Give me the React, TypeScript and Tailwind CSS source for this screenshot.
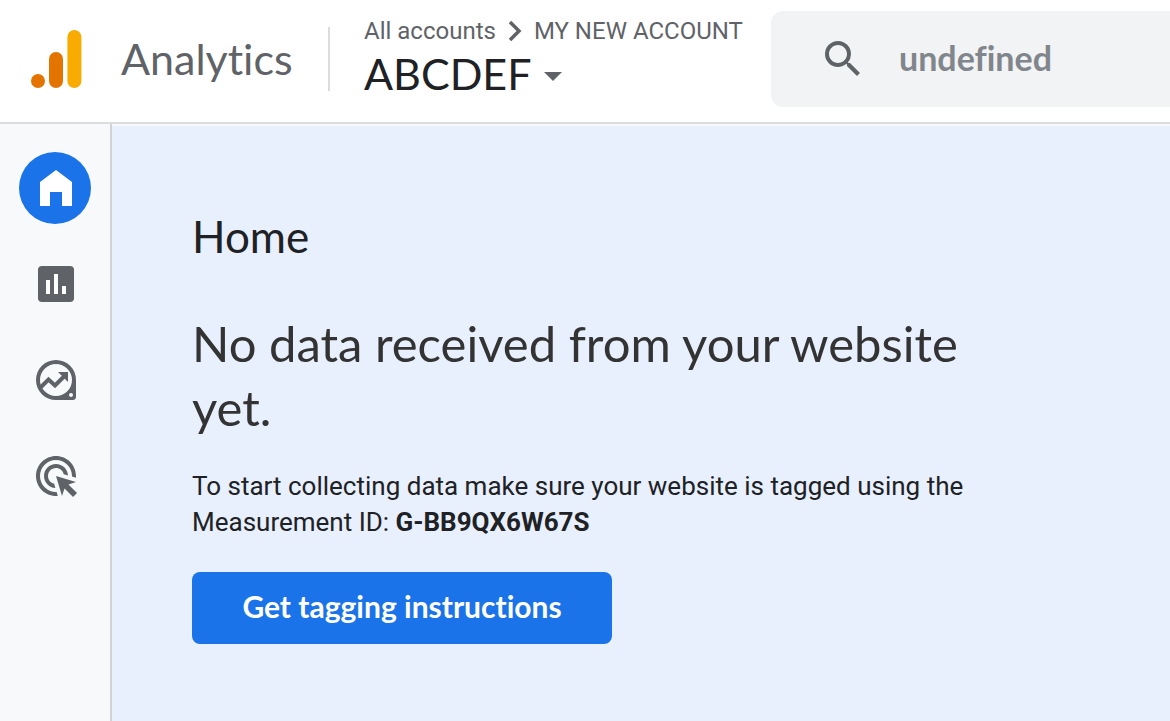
import React from 'react';

const NAV_ITEMS = [
    { label: 'Home', icon: HomeIcon, active: true },
    { label: 'Reports', icon: ReportsIcon, active: false },
    { label: 'Explore', icon: ExploreIcon, active: false },
    { label: 'Advertising', icon: AdvertisingIcon, active: false },
];

function LogoIcon() {
    return (
        <svg width="52" height="60" viewBox="0 0 52 60" aria-hidden="true">
            <circle cx="7" cy="52" r="7" fill="#e37400" />
            <rect x="18" y="23" width="14" height="36" rx="7" fill="#e37400" />
            <rect x="36.400" y="1" width="14" height="58" rx="7" fill="#f9ab00" />
        </svg>
    );
}

function HomeIcon() {
    return (
        <svg width="32" height="36" viewBox="0 0 32 36" fill="currentColor" aria-hidden="true">
            <path d="M0 36V12L16 0l16 12v24H22V22H10v14z" />
        </svg>
    );
}

function ReportsIcon() {
    return (
        <svg width="36" height="36" viewBox="0 0 36 36" aria-hidden="true">
            <rect width="36" height="36" rx="4" fill="currentColor" />
            <path d="M8 14h4v14H8zM16 8h4v20h-4zM24 20h4v8h-4z" fill="#fff" />
        </svg>
    );
}

function ExploreIcon() {
    return (
        <svg width="40" height="40" viewBox="0 0 40 40" fill="none" aria-hidden="true">
            <path
                fillRule="evenodd"
                fill="currentColor"
                d="M20 0a20 20 0 0 0 0 40h16.500a3.500 3.500 0 0 0 3.500-3.500V20A20 20 0 0 0 20 0zM20 4a16 16 0 1 1 0 32a16 16 0 0 1 0-32zM35 33a2 2 0 1 1 0 4a2 2 0 0 1 0-4z"
            />
            <path d="M4.500 27.500l8-8 6.500 6 10-10" stroke="currentColor" strokeWidth="4" />
            <path d="M22 12h10v10z" fill="currentColor" />
        </svg>
    );
}

function AdvertisingIcon() {
    return (
        <svg width="48" height="48" viewBox="0 0 24 24" fill="currentColor" aria-hidden="true">
            <path d="M11.710 17.990C8.530 17.840 6 15.220 6 12c0-3.310 2.690-6 6-6 3.220 0 5.840 2.530 5.990 5.710l-2.100-.63C15.480 9.310 13.890 8 12 8c-2.210 0-4 1.790-4 4 0 1.890 1.310 3.480 3.080 3.890l.63 2.100zM22 12c0 .3-.01.6-.04.9l-1.970-.59c.01-.1.010-.21.010-.31 0-4.420-3.580-8-8-8s-8 3.580-8 8 3.580 8 8 8c.1 0 .21 0 .31-.01l.59 1.970c-.3.030-.6.040-.9.040C6.480 22 2 17.520 2 12S6.480 2 12 2s10 4.480 10 10zm-3.770 4.260L22 15l-10-3 3 10 1.260-3.770 4.270 4.270 1.980-1.980-4.280-4.260z" />
        </svg>
    );
}

const Header: React.FC = () => (
    <header className="flex h-31 shrink-0 border-b-2 border-[#dadce0] bg-white">
        {/* Brand */}
        <div className="flex shrink-0 items-center pl-[31px] pb-1">
            <LogoIcon />
            <span className="w-[245px] pl-[38px] text-[43px] leading-[52px] text-[#5f6368]">Analytics</span>
            <div className="h-16 w-0.5 bg-[#dadce0]" />
        </div>

        {/* Account picker */}
        <div className="flex w-[441px] shrink-0 flex-col pl-[34px] pt-4">
            <nav className="flex items-center gap-3 whitespace-nowrap font-['Roboto',sans-serif] text-[24px] leading-[30px] text-[#5f6368]">
                <a href="#accounts">All accounts</a>
                <svg width="14" height="22" viewBox="0 0 14 22" fill="none" aria-hidden="true">
                    <path d="M2 2l9 9-9 9" stroke="#5f6368" strokeWidth="3.500" />
                </svg>
                <a href="#account">MY NEW ACCOUNT</a>
            </nav>
            <button className="flex items-center gap-3 text-left text-[43px] leading-[56px] text-[#202124]">
                ABCDEF
                <svg width="18" height="9" viewBox="0 0 18 9" fill="#5f6368" className="mt-1" aria-hidden="true">
                    <path d="M0 0h18L9 9z" />
                </svg>
            </button>
        </div>

        {/* Search */}
        <label className="mt-[11px] flex h-24 min-w-0 flex-1 items-center rounded-l-xl bg-[#f1f3f4] pl-12">
            <svg width="48" height="48" viewBox="0 0 24 24" fill="#5f6368" className="shrink-0" aria-hidden="true">
                <path d="M15.500 14h-.79l-.28-.27A6.471 6.471 0 0 0 16 9.500 6.500 6.500 0 1 0 9.500 16c1.610 0 3.090-.59 4.230-1.570l.27.28v.79l5 4.990L20.490 19l-4.990-5zm-6 0C7.010 14 5 11.990 5 9.500S7.010 5 9.500 5 14 7.010 14 9.500 11.990 14 9.500 14z" />
            </svg>
            <input
                type="text"
                aria-label="Search"
                placeholder="undefined"
                className="ml-8 min-w-0 flex-1 bg-transparent pb-1 text-[34px] font-bold text-[#80868b] outline-none placeholder:text-[#80868b]"
            />
        </label>
    </header>
);

const Sidebar: React.FC = () => (
    <nav className="flex w-28 shrink-0 flex-col items-center gap-6 border-r-2 border-[#d0d2d4] bg-[#f8f9fa] pt-7">
        {NAV_ITEMS.map(({ label, icon: Icon, active }) => (
            <button
                key={label}
                aria-label={label}
                className={`flex h-18 w-18 shrink-0 items-center justify-center rounded-full pl-0.5 ${
                    active ? 'bg-[#1a73e8] text-white' : 'text-[#5f6368]'
                }`}
            >
                <Icon />
            </button>
        ))}
    </nav>
);

export default function App() {
    return (
        <div className="flex min-h-screen flex-col overflow-hidden font-['Lato',sans-serif] [font-variant-ligatures:none]">
            <Header />
            <div className="flex flex-1">
                <Sidebar />
                <main className="flex-1 border-t-2 border-[#f8f9fa] bg-[#e8f0fe] px-20 pt-[82px]">
                    <h1 className="text-[44px] leading-[56px] text-[#202124]">Home</h1>
                    <div className="mt-[47px] max-w-[800px]">
                        <h2 className="text-[49px] leading-[64px] text-[#333333]">
                            No data received from your website yet.
                        </h2>
                        <p className="mt-[29px] font-['Roboto',sans-serif] text-[26px] leading-9 text-[#202124]">
                            To start collecting data make sure your website is tagged using the Measurement ID:{' '}
                            <b className="font-bold">G-BB9QX6W67S</b>
                        </p>
                        <button className="mt-8 h-18 w-[420px] rounded-lg bg-[#1a73e8] pb-1 text-[30px] font-bold text-white">
                            Get tagging instructions
                        </button>
                    </div>
                </main>
            </div>
        </div>
    );
}
